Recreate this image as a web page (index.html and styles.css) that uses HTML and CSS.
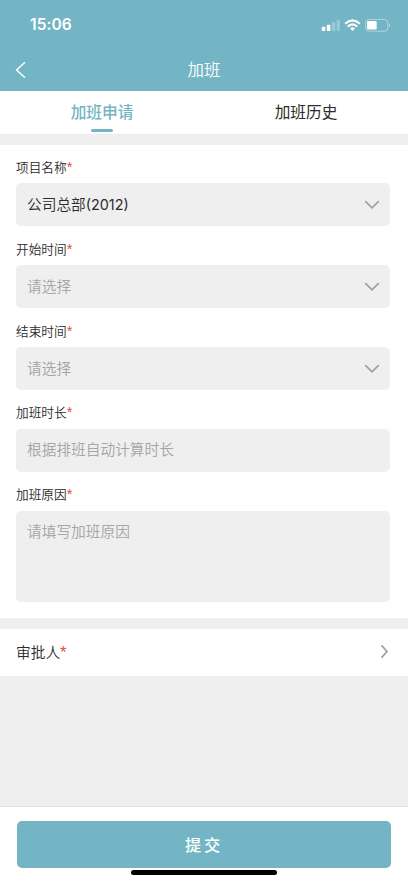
FILE: index.html
```html
<!DOCTYPE html>
<html lang="zh-CN">
<head>
<meta charset="utf-8">
<title>加班</title>
<link rel="stylesheet" href="styles.css">
</head>
<body>
<div class="app">
  <header class="header">
    <div class="status">
      <span class="clock">15:06</span>
      <svg class="status-icons" width="72" height="16" viewBox="0 0 72 16" fill="#fff">
        <rect x="2.8" y="9.8" width="3.5" height="4.2" rx=".8"/>
        <rect x="7.8" y="7.8" width="3.6" height="6.2" rx=".8"/>
        <rect x="12.8" y="5.2" width="3.6" height="8.8" rx=".8" opacity=".27"/>
        <rect x="17.6" y="2.9" width="3.4" height="11.1" rx=".8" opacity=".27"/>
        <g fill="none" stroke="#fff" stroke-width="2.1">
          <path d="M26.1 6.8Q33.5 0.1 40.9 6.8"/>
          <path d="M28.7 9.5Q33.5 5.1 38.3 9.5"/>
        </g>
        <path d="M31 11.3Q33.5 9.3 36 11.3L33.5 14.1Z"/>
        <rect x="46.6" y="2.5" width="22.2" height="11.7" rx="3.2" fill="none" stroke="#fff" stroke-opacity=".42"/>
        <rect x="48" y="4" width="9.7" height="8.6" rx="1.4"/>
        <path d="M69.9 6.4Q72.2 8.3 69.9 10.2Z" opacity=".5"/>
      </svg>
    </div>
    <div class="nav">
      <svg class="back" width="12" height="18" viewBox="0 0 12 18"><path d="M10 1.2L1.6 9L10 16.8"/></svg>
      <h1 class="title">加班</h1>
    </div>
  </header>
  <nav class="tabs">
    <a class="tab active">加班申请</a>
    <a class="tab">加班历史</a>
  </nav>
  <main class="form">
    <div class="group">
      <div class="label">项目名称<span class="req">*</span></div>
      <div class="field filled"><span>公司总部<span class="code">(2012)</span></span><svg class="down" width="16" height="10" viewBox="0 0 16 10"><path d="M1.2 1.2L8 7.8L14.8 1.2"/></svg></div>
    </div>
    <div class="group">
      <div class="label">开始时间<span class="req">*</span></div>
      <div class="field"><span>请选择</span><svg class="down" width="16" height="10" viewBox="0 0 16 10"><path d="M1.2 1.2L8 7.8L14.8 1.2"/></svg></div>
    </div>
    <div class="group">
      <div class="label">结束时间<span class="req">*</span></div>
      <div class="field"><span>请选择</span><svg class="down" width="16" height="10" viewBox="0 0 16 10"><path d="M1.2 1.2L8 7.8L14.8 1.2"/></svg></div>
    </div>
    <div class="group">
      <div class="label">加班时长<span class="req">*</span></div>
      <div class="field"><span>根据排班自动计算时长</span></div>
    </div>
    <div class="group">
      <div class="label">加班原因<span class="req">*</span></div>
      <div class="field area"><span>请填写加班原因</span></div>
    </div>
  </main>
  <section class="approver">
    <span>审批人<span class="req">*</span></span>
    <svg class="next" width="9" height="15" viewBox="0 0 9 15"><path d="M1.5 1.4L7 7.5L1.5 13.6"/></svg>
  </section>
  <footer class="footer">
    <div class="submit">提交</div>
    <div class="home-bar"></div>
  </footer>
</div>
</body>
</html>
```
FILE: styles.css
```css
* { box-sizing: border-box; }
body {
  margin: 0;
  background: #efefef;
  font-family: "Noto Sans CJK SC", sans-serif;
  color: #2b2b2b;
}
.app {
  height: 883px;
  display: flex;
  flex-direction: column;
  overflow: hidden;
}
.header { height: 91px; background: #73b5c4; color: #fff; }
.status {
  height: 48px;
  padding: 1px 17px 0 30px;
  display: flex;
  align-items: center;
  justify-content: space-between;
}
.clock { font: 600 15.5px/20px Inter, sans-serif; letter-spacing: .1px; }
.nav {
  height: 43px;
  padding: 0 15px;
  display: grid;
  grid-template-columns: 12px 1fr 12px;
  align-items: center;
}
.title { margin: 0 0 2px; font-size: 16.5px; line-height: 24px; font-weight: 350; text-align: center; }
.back path { fill: none; stroke: #fff; stroke-width: 1.5; }
.tabs { height: 43px; background: #fff; display: flex; }
.tab {
  flex: 1;
  display: flex;
  flex-direction: column;
  align-items: center;
  font-size: 15.7px;
  line-height: 24px;
  padding-top: 9px;
}
.active { color: #73b5c4; font-weight: 500; }
.active::after {
  content: "";
  width: 22px;
  height: 3px;
  margin-top: 5px;
  border-radius: 2px;
  background: #73b5c4;
}
.form {
  height: 473px;
  margin-top: 11px;
  padding: 12px 18px 0 16px;
  background: #fff;
  display: flex;
  flex-direction: column;
  gap: 12.6px;
}
.label { height: 26.4px; font-size: 12.7px; line-height: 19.4px; font-weight: 350; }
.req { color: #d8503f; font-family: "Liberation Sans", sans-serif; font-size: 1.15em; font-weight: 400; line-height: 1; }
.field {
  height: 42.8px;
  padding: 0 10px 1.4px 11px;
  border-radius: 5px;
  background: #efefef;
  color: #a5a5a5;
  display: flex;
  align-items: center;
  justify-content: space-between;
  font-size: 14.7px;
  line-height: 22px;
  font-weight: 350;
}
.filled { color: #2b2b2b; }
.code { font-family: Inter, sans-serif; font-size: 14.4px; font-weight: 400; line-height: 1; }
.area { height: 91px; align-items: flex-start; padding-top: 9px; }
.down { margin-top: 2px; }
.down path, .next path { fill: none; stroke: #a0a0a0; stroke-width: 1.7; }
.approver {
  height: 47px;
  margin-top: 11px;
  padding: 0 19px 2px 16px;
  background: #fff;
  display: flex;
  align-items: center;
  justify-content: space-between;
  font-size: 14.7px;
  line-height: 22px;
  font-weight: 350;
}
.footer {
  height: 77px;
  margin-top: auto;
  padding: 14px 17px 0;
  border-top: 1px solid #e2e2e2;
  background: #fff;
}
.submit {
  height: 47px;
  border-radius: 5px;
  background: #73b5c4;
  color: #fff;
  font-size: 16.3px;
  line-height: 47px;
  font-weight: 500;
  letter-spacing: 2.6px;
  text-align: center;
}
.home-bar { width: 146px; height: 5px; margin: 2px auto 0; border-radius: 3px; background: #000; }
```
